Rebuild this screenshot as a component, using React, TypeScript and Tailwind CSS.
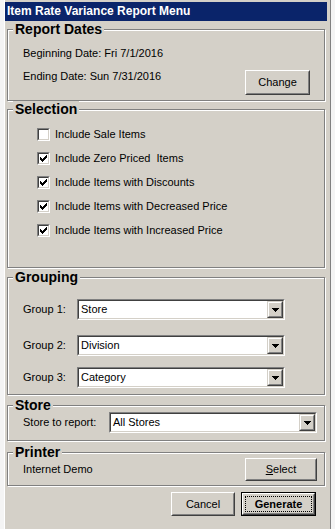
import type { ReactNode } from "react";

const face = "bg-[#d4d0c8]";

function GroupBox({ title, className, children }: { title: string; className: string; children?: ReactNode }) {
  return (
    <div
      className={`relative ml-[2px] w-[318px] border border-[#808080] shadow-[inset_1px_1px_0_#fff,1px_1px_0_#fff] ${className}`}
    >
      <span className={`absolute left-[5px] top-[-9px] ${face} px-[2px] text-[14px] font-bold leading-[16px] text-black`}>
        {title}
      </span>
      {children}
    </div>
  );
}

function Button({ children, className, isDefault }: { children: ReactNode; className: string; isDefault?: boolean }) {
  if (isDefault) {
    return (
      <div className={`border border-black ${className}`}>
        <div className="flex h-full w-full border border-t-white border-l-white border-r-[#404040] border-b-[#404040]">
          <div className="flex h-full w-full items-center justify-center border border-t-[#d4d0c8] border-l-[#d4d0c8] border-r-[#808080] border-b-[#808080] p-[1px]">
            <div className="flex h-full w-full items-center justify-center border border-dotted border-black text-[11px] font-bold">
              {children}
            </div>
          </div>
        </div>
      </div>
    );
  }
  return (
    <div className={`border border-t-white border-l-white border-r-[#404040] border-b-[#404040] ${className}`}>
      <div className="flex h-full w-full items-center justify-center border border-t-[#d4d0c8] border-l-[#d4d0c8] border-r-[#808080] border-b-[#808080] text-[11px]">
        {children}
      </div>
    </div>
  );
}

function Combo({ value }: { value: string }) {
  return (
    <div className="h-[21px] w-[208px] border border-t-[#808080] border-l-[#808080] border-r-white border-b-white">
      <div className="flex h-full w-full border border-t-[#404040] border-l-[#404040] border-r-[#d4d0c8] border-b-[#d4d0c8] bg-white">
        <span className="flex-1 pl-[2px] text-[11px] leading-[17px]">{value}</span>
        <div className="h-[17px] w-[16px] border border-t-[#d4d0c8] border-l-[#d4d0c8] border-r-[#404040] border-b-[#404040]">
          <div className={`flex h-full w-full items-center justify-center border border-t-white border-l-white border-r-[#808080] border-b-[#808080] ${face}`}>
            <svg width="7" height="4" viewBox="0 0 7 4" shapeRendering="crispEdges">
              <polygon points="0,0 7,0 3.5,4" fill="#000" />
            </svg>
          </div>
        </div>
      </div>
    </div>
  );
}

function Check({ label, checked }: { label: string; checked: boolean }) {
  return (
    <div className="flex h-[24px] items-center gap-[5px]">
      <div className="h-[13px] w-[13px] border border-t-[#808080] border-l-[#808080] border-r-white border-b-white">
        <div className="flex h-full w-full items-center justify-center border border-t-[#404040] border-l-[#404040] border-r-[#d4d0c8] border-b-[#d4d0c8] bg-white">
          {checked && (
            <svg width="7" height="7" viewBox="0 0 7 7" shapeRendering="crispEdges">
              <polygon points="0,2 2,4 7,-1 7,2 2,7 0,5" fill="#000" />
            </svg>
          )}
        </div>
      </div>
      <span className="whitespace-pre text-[11px] leading-[13px]">{label}</span>
    </div>
  );
}

const options = [
  { label: "Include Sale Items", checked: false },
  { label: "Include Zero Priced  Items", checked: true },
  { label: "Include Items with Discounts", checked: true },
  { label: "Include Items with Decreased Price", checked: true },
  { label: "Include Items with Increased Price", checked: true },
];

const groups = [
  { label: "Group 1:", value: "Store", mt: "mt-0" },
  { label: "Group 2:", value: "Division", mt: "mt-[15px]" },
  { label: "Group 3:", value: "Category", mt: "mt-[11px]" },
];

export default function App() {
  return (
    <div className="h-[529px] w-[335px] overflow-hidden bg-[#f4f4f4] font-['Liberation_Sans',Arial,sans-serif] text-black">
      <div className={`ml-[4px] flex h-[529px] w-[327px] flex-col border-l border-r border-l-white border-r-[#808080] pt-[2px] ${face}`}>
        {/* Title bar */}
        <div className="h-[19px] w-[322px] bg-[#0a246a] pl-[2px] text-[12px] font-bold leading-[19px] text-white">
          Item Rate Variance Report Menu
        </div>

        {/* Report Dates */}
        <GroupBox title="Report Dates" className="mt-[8px] h-[72px]">
          <div className="pl-[15px] pt-[17px] text-[11px] leading-[13px]">
            <div>Beginning Date: Fri 7/1/2016</div>
            <div className="mt-[10px] flex items-start">
              <span>Ending Date: Sun 7/31/2016</span>
              <Button className="ml-auto mr-[14px] h-[25px] w-[65px]">Change</Button>
            </div>
          </div>
        </GroupBox>

        {/* Selection */}
        <GroupBox title="Selection" className="mt-[8px] h-[159px]">
          <div className="pl-[29px] pt-[12px]">
            {options.map((o) => (
              <Check key={o.label} label={o.label} checked={o.checked} />
            ))}
          </div>
        </GroupBox>

        {/* Grouping */}
        <GroupBox title="Grouping" className="mt-[9px] h-[118px]">
          <div className="pl-[15px] pt-[21px]">
            {groups.map((g) => (
              <div key={g.label} className={`flex items-center ${g.mt}`}>
                <span className="w-[54px] text-[11px]">{g.label}</span>
                <Combo value={g.value} />
              </div>
            ))}
          </div>
        </GroupBox>

        {/* Store */}
        <GroupBox title="Store" className="mt-[10px] h-[36px]">
          <div className="flex items-center pl-[15px] pt-[6px]">
            <span className="w-[86px] text-[11px]">Store to report:</span>
            <Combo value="All Stores" />
          </div>
        </GroupBox>

        {/* Printer */}
        <GroupBox title="Printer" className="mt-[11px] h-[34px]">
          <div className="flex items-center pl-[15px] pt-[5px]">
            <span className="text-[11px]">Internet Demo</span>
            <Button className="ml-auto mr-[7px] h-[23px] w-[72px]">
              <span>
                <span className="underline">S</span>elect
              </span>
            </Button>
          </div>
        </GroupBox>

        {/* Actions */}
        <div className="mr-[14px] mt-[6px] flex justify-end gap-[6px]">
          <Button className="h-[24px] w-[64px]">Cancel</Button>
          <Button isDefault className="h-[24px] w-[75px]">Generate</Button>
        </div>
      </div>
    </div>
  );
}
